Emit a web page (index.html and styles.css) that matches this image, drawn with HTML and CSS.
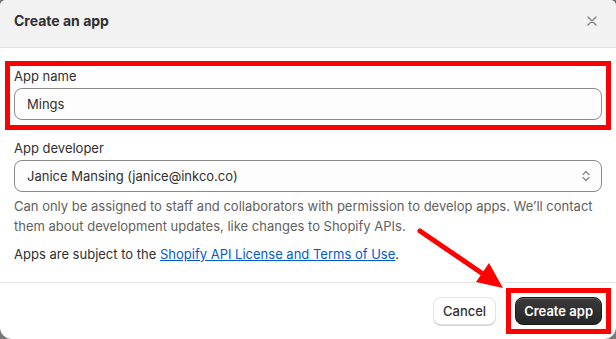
FILE: index.html
```html
<!DOCTYPE html>
<html>
<head>
    <meta charset="utf-8">
    <link rel="stylesheet" href="styles.css">
</head>
<body>
    <div class="modal">
        <div class="modal-header">
            <h2>Create an app</h2>
            <button class="close-btn" aria-label="Close">
                <svg width="10" height="10" viewBox="0 0 10 10"><path d="M1 1L9 9M9 1L1 9" stroke="#8a8a8a" stroke-width="1.5" stroke-linecap="round"/></svg>
            </button>
        </div>

        <div class="modal-body">
            <div class="form-group highlight">
                <label for="appName">App name</label>
                <input type="text" id="appName" value="Mings">
            </div>

            <div class="form-group">
                <label for="appDeveloper">App developer</label>
                <div class="select">
                    <span>Janice Mansing (janice@inkco.co)</span>
                    <svg width="12" height="16" viewBox="0 0 12 16"><path d="M3 6.5L6 3.5L9 6.5M3 9.5L6 12.5L9 9.5" fill="none" stroke="#8a8a8a" stroke-width="1.4" stroke-linecap="round" stroke-linejoin="round"/></svg>
                </div>
                <div class="help-text">Can only be assigned to staff and collaborators with permission to develop apps. We’ll contact them about development updates, like changes to Shopify APIs.</div>
            </div>

            <p class="terms">Apps are subject to the <a href="#">Shopify API License and Terms of Use</a>.</p>
        </div>

        <div class="modal-footer">
            <button class="btn-secondary">Cancel</button>
            <div class="highlight-btn">
                <button class="btn-primary">Create app</button>
            </div>
        </div>

        <svg class="annotation" width="616" height="339" viewBox="0 0 616 339">
            <line x1="420" y1="231" x2="486" y2="276" stroke="#ff0000" stroke-width="5" stroke-linecap="round"/>
            <polygon points="503,288 476,282 489,263" fill="#ff0000"/>
        </svg>
    </div>
</body>
</html>
```

FILE: styles.css
```css
html, body {
    margin: 0;
    height: 100%;
}

body {
    background: #7a7a7a;
    font-family: Inter, 'Noto Sans', sans-serif;
    font-size: 13px;
    line-height: 20px;
    color: #303030;
}

.modal {
    position: relative;
    height: 339px;
    background: #ffffff;
    border-radius: 6px 6px 12px 12px;
    overflow: hidden;
    display: flex;
    flex-direction: column;
}

.modal-header {
    display: flex;
    align-items: center;
    justify-content: space-between;
    height: 48px;
    padding: 0 14px 5px 14px;
    box-sizing: border-box;
    background: #f2f2f2;
    border-bottom: 1px solid #e3e3e3;
}

.modal-header h2 {
    margin: 0;
    font-size: 14px;
    font-weight: 650;
    color: #303030;
}

.close-btn {
    width: 20px;
    height: 20px;
    padding: 0;
    border: none;
    background: none;
    display: flex;
    align-items: center;
    justify-content: center;
}

.modal-body {
    padding: 13px 14px 18px 14px;
}

.form-group label {
    display: block;
    margin-bottom: 2px;
}

.highlight {
    border: 5px solid #ff0000;
    margin: 0 -9px 8px -9px;
    padding: 0 4px 5px 4px;
}

input {
    display: block;
    width: 100%;
    height: 32px;
    box-sizing: border-box;
    padding: 0 12px;
    border: 1px solid #8a8a8a;
    border-radius: 8px;
    background: #fdfdfd;
    font-family: inherit;
    font-size: 13px;
    color: #303030;
}

.select {
    display: flex;
    align-items: center;
    justify-content: space-between;
    height: 32px;
    box-sizing: border-box;
    padding: 0 9px 0 12px;
    border: 1px solid #8a8a8a;
    border-radius: 8px;
    background: #fdfdfd;
}

.help-text {
    margin-top: 4px;
    color: #616161;
}

.terms {
    margin: 8px 0 0 0;
}

.terms a {
    color: #005bd3;
    text-decoration: underline;
}

.modal-footer {
    display: flex;
    justify-content: flex-end;
    align-items: center;
    gap: 10px;
    padding: 14px 14px;
    border-top: 1px solid #e3e3e3;
}

.modal-footer button {
    height: 28px;
    border-radius: 8px;
    font-family: inherit;
    font-size: 13px;
    cursor: pointer;
}

.btn-secondary {
    padding: 0 9px;
    background: #ffffff;
    color: #303030;
    border: 1px solid #e3e3e3;
    font-weight: 500;
    box-shadow: 0 1px 0 #d4d4d4;
}

.highlight-btn {
    border: 5px solid #ff0000;
    padding: 4px;
    margin: -9px -9px -9px 0;
    display: flex;
}

.btn-primary {
    padding: 0 8px;
    background: linear-gradient(#3a3a3a, #262626);
    color: #ffffff;
    border: 1px solid #1a1a1a;
    font-weight: 600;
    box-shadow: inset 0 1px 0 rgba(255, 255, 255, 0.2);
}

.annotation {
    position: absolute;
    left: 0;
    top: 0;
    pointer-events: none;
}
```
